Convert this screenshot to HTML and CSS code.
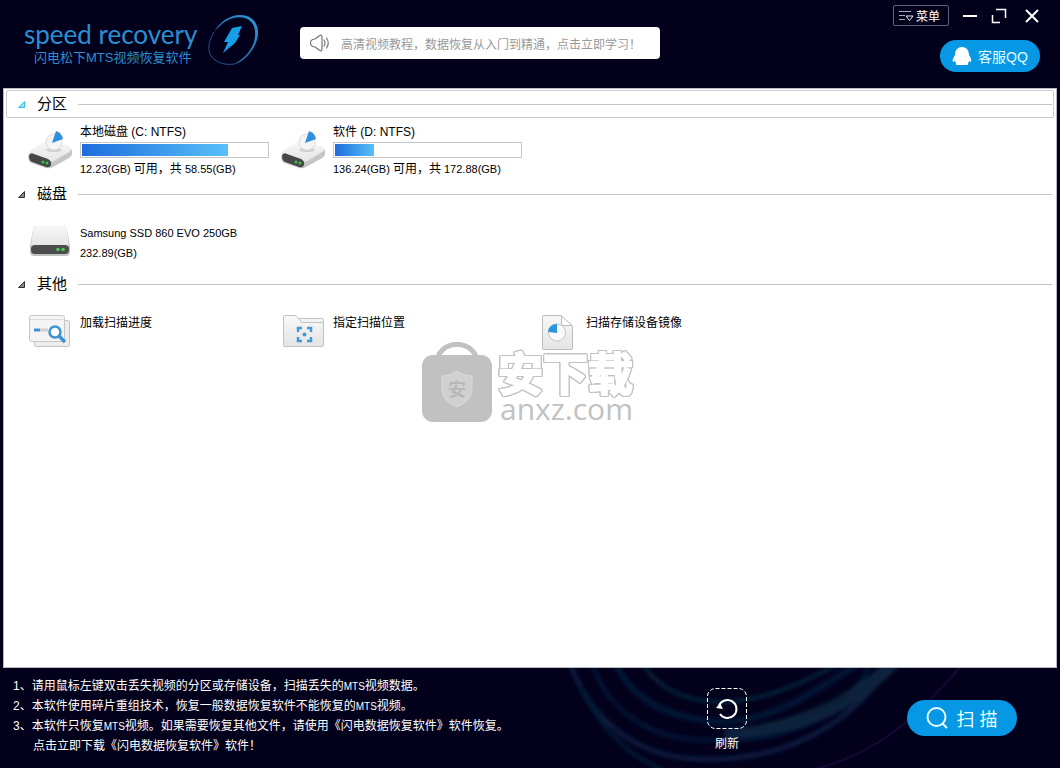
FILE: index.html
```html
<!DOCTYPE html>
<html lang="zh-CN">
<head>
<meta charset="utf-8">
<title>闪电松下MTS视频恢复软件</title>
<link rel="stylesheet" href="styles.css">
</head>
<body>
<header class="header">
  <div class="brand">
    <div class="brand-text">
      <span class="brand-name">speed recovery</span>
      <span class="brand-sub">闪电松下MTS视频恢复软件</span>
    </div>
    <svg class="brand-mark" viewBox="0 0 54 54" aria-hidden="true">
      <defs><linearGradient id="ring" x1="0" y1="1" x2="1" y2="0"><stop offset="0" stop-color="#1a4f80"/><stop offset="1" stop-color="#2c9ce0"/></linearGradient></defs>
      <path d="M8 19C15 6 29-1 41 3C52 7 55 20 49 32C44 42 36 50 26 52C38 46 45 38 48 29C51 17 48 8 39 5C28 2 17 8 8 19Z" fill="url(#ring)"/>
      <path d="M8 19C1 30 1 42 9 47C14 51 21 52 28 51" fill="none" stroke="#1c568a" stroke-width="1"/>
      <path d="M26 15L36 13L32 22H34L29 30L17 40L22 29H18Z" fill="#169fe6"/>
    </svg>
  </div>
  <a class="banner" href="#">
    <svg class="banner-icon" viewBox="0 0 20 18" aria-hidden="true" fill="none" stroke="#777" stroke-width="1.2" stroke-linejoin="round" stroke-linecap="round"><path d="M1 7Q0 9 1 11Q2 13 5 13L9 16Q12 18 12 15V3Q12 0 9 2L5 5Q2 5 1 7Z"/><path d="M14 6Q16 9 14 12M16.500 4Q20 9 16.500 14"/></svg>
    <span>高清视频教程，数据恢复从入门到精通，点击立即学习！</span>
  </a>
  <div class="header-right">
    <div class="window-bar">
      <button class="menu-btn"><svg width="15" height="12" viewBox="0 0 15 12" aria-hidden="true" fill="none" stroke="#aaa6bd"><path d="M0 1.500H12M0 5.500H6M0 9.500H6"/><path d="M7 6H14L10.500 10.500Z" stroke="#eee"/></svg>菜单</button>
      <button class="win-btn" aria-label="最小化"><svg width="16" height="16" viewBox="0 0 16 16"><path d="M1 8H15" stroke="#fff" stroke-width="2"/></svg></button>
      <button class="win-btn" aria-label="最大化"><svg width="16" height="16" viewBox="0 0 16 16" fill="none" stroke="#fff" stroke-width="1.500"><path d="M5 1.500H14.500V10M1.500 7V14.500H9"/></svg></button>
      <button class="win-btn" aria-label="关闭"><svg width="16" height="16" viewBox="0 0 16 16"><path d="M2 2L14 14M14 2L2 14" stroke="#fff" stroke-width="2"/></svg></button>
    </div>
    <button class="qq-btn"><svg width="20" height="20" viewBox="0 0 20 20" aria-hidden="true"><path d="M10 1C15 1 17 5 17 9C18 11 20 13 19 16L17 15Q17 16 16 17Q17 19 14 19H6Q3 19 4 17Q3 16 3 15L1 16C0 13 2 11 3 9C3 5 5 1 10 1Z" fill="#fff"/></svg>客服QQ</button>
  </div>
</header>

<main class="content">
  <section class="group">
    <h2 class="group-head active"><svg class="caret" viewBox="0 0 7 7" aria-hidden="true"><path d="M6.500 0.500V6.500H0.500Z"/></svg><span>分区</span></h2>
    <div class="items drives">
      <button class="item">
        <svg class="icon" viewBox="0 0 44 44" aria-hidden="true">
          <defs>
            <linearGradient id="top" x1="0" y1="0" x2="0" y2="1"><stop offset="0" stop-color="#f8f8f8"/><stop offset="1" stop-color="#e4e4e4"/></linearGradient>
            <linearGradient id="side" x1="0" y1="0" x2="1" y2="1"><stop offset="0" stop-color="#e8e8e8"/><stop offset="1" stop-color="#b8b8b8"/></linearGradient>
            <g id="drive">
              <path d="M1 22L17 12Q20 10 24 12L41 17Q45 19 44 24Q44 26 41 28L25 37Q22 39 18 38L3 33Q0 32 0 26Z" fill="url(#side)"/>
              <path d="M2 21L17 12Q20 10 24 12L41 17Q45 19 41 22L26 31Q23 33 19 31L3 25Q0 23 2 21Z" fill="url(#top)"/>
              <path d="M1 26Q2 22 6 24L20 29Q24 31 23 35Q22 38 18 37L4 32Q1 31 1 26Z" fill="#454847"/>
              <circle cx="15" cy="32" r="1.500" fill="#3fc04b"/><circle cx="19" cy="33" r="1.500" fill="#3fc04b"/>
              <ellipse cx="26" cy="20" rx="8" ry="2" fill="#d0d0d0"/>
              <circle cx="26" cy="12" r="8" fill="#f5f5f5" stroke="#dcdcdc"/>
              <path d="M24 13L28 1Q34 3 35 9Z" fill="#2f8fda"/>
            </g>
          </defs>
          <use href="#drive"/>
        </svg>
        <span class="item-text">
          <span class="title">本地磁盘 (C: NTFS)</span>
          <progress class="usage" max="100" value="79" aria-label="C: 已用空间"></progress>
          <span class="detail">12.23(GB) <span class="zh">可用，共</span> 58.55(GB)</span>
        </span>
      </button>
      <button class="item">
        <svg class="icon" viewBox="0 0 44 44" aria-hidden="true"><use href="#drive"/></svg>
        <span class="item-text">
          <span class="title">软件 (D: NTFS)</span>
          <progress class="usage" max="100" value="21" aria-label="D: 已用空间"></progress>
          <span class="detail">136.24(GB) <span class="zh">可用，共</span> 172.88(GB)</span>
        </span>
      </button>
    </div>
  </section>

  <section class="group">
    <h2 class="group-head"><svg class="caret" viewBox="0 0 7 7" aria-hidden="true"><path d="M6.500 0.500V6.500H0.500Z"/></svg><span>磁盘</span></h2>
    <div class="items">
      <button class="item">
        <svg class="icon" viewBox="0 0 44 36" aria-hidden="true">
          <path d="M5 5Q6 1 9 1H35Q38 1 39 5L42 21V27Q42 31 38 31H6Q2 31 2 27V21Z" fill="#c2c2c2"/>
          <path d="M5 5Q6 1 9 1H35Q38 1 39 5L41 21H3Z" fill="url(#top)"/>
          <rect x="3" y="20" width="38" height="9" rx="4" fill="#4a4d4b"/>
          <circle cx="30" cy="24.500" r="1.800" fill="#48c858"/><circle cx="35" cy="24.500" r="1.800" fill="#48c858"/>
        </svg>
        <span class="item-text">
          <span class="detail">Samsung SSD 860 EVO 250GB</span>
          <span class="detail">232.89(GB)</span>
        </span>
      </button>
    </div>
  </section>

  <section class="group">
    <h2 class="group-head"><svg class="caret" viewBox="0 0 7 7" aria-hidden="true"><path d="M6.500 0.500V6.500H0.500Z"/></svg><span>其他</span></h2>
    <div class="items">
      <button class="item">
        <svg class="icon" viewBox="0 0 44 36" aria-hidden="true">
          <rect x="6.500" y="5.500" width="35" height="26" rx="2" fill="#ededed" stroke="#c2c2c2"/>
          <rect x="1.500" y="0.500" width="35" height="26" rx="2" fill="#f4f4f4" stroke="#c6c6c6"/>
          <path d="M2 4.500H36" stroke="#dcdcdc"/>
          <path d="M6 15H12" stroke="#3d92d4" stroke-width="3"/><path d="M12 15H20" stroke="#cfcfcf" stroke-width="3"/>
          <circle cx="27" cy="17" r="5.500" fill="#fff" stroke="#3d92d4" stroke-width="2.500"/>
          <path d="M31 21L37 27" stroke="#3d92d4" stroke-width="3.500"/>
        </svg>
        <span class="item-text"><span class="title">加载扫描进度</span></span>
      </button>
      <button class="item">
        <svg class="icon" viewBox="0 0 44 36" aria-hidden="true">
          <path d="M16 3.500H41Q42.500 3.500 42.500 5V12H16Z" fill="#f3f3f3" stroke="#c6c6c6"/>
          <path d="M2.500 2Q2.500 0.500 4 0.500H15L21 7.500H41Q42.500 7.500 42.500 9V30Q42.500 31.500 41 31.500H4Q2.500 31.500 2.500 30Z" fill="url(#top)" stroke="#c2c2c2"/>
          <path d="M17 17V13H21M26 13H30V17M30 22V26H26M21 26H17V22" fill="none" stroke="#3f98d8" stroke-width="2.500"/><circle cx="23.500" cy="19.500" r="2" fill="#3f98d8"/>
        </svg>
        <span class="item-text"><span class="title">指定扫描位置</span></span>
      </button>
      <button class="item">
        <svg class="icon" viewBox="0 0 44 36" aria-hidden="true">
          <path d="M10 0.500H27L38.500 11V33Q38.500 34.500 37 34.500H10Q8.500 34.500 8.500 33V2Q8.500 0.500 10 0.500Z" fill="url(#top)" stroke="#bdbdbd"/>
          <path d="M27.500 1V9Q27.500 10.500 29 10.500H38Z" fill="#fff" stroke="#bdbdbd"/>
          <circle cx="23" cy="17.500" r="8.500" fill="#fafafa" stroke="#c6c6c6"/>
          <path d="M23 18L14 17Q15 9 23 9Z" fill="#2f93df"/>
        </svg>
        <span class="item-text"><span class="title">扫描存储设备镜像</span></span>
      </button>
    </div>
  </section>

  <div class="watermark">
    <svg class="bag" viewBox="0 0 72 82" aria-hidden="true">
      <path d="M17 15C23 -2 49 -2 55 15" fill="none" stroke="#c1c1c1" stroke-width="5"/>
      <rect x="1" y="13" width="70" height="67" rx="11" fill="#c1c1c1"/>
      <path d="M36 29Q43 34 51 34V47Q50 60 36 65Q22 60 21 47V34Q29 34 36 29Z" fill="#d0d0d0" stroke="#dadada"/>
      <text class="bag-char" x="36" y="54" text-anchor="middle">安</text>
    </svg>
    <div class="watermark-text">
      <span class="watermark-zh">安下载</span>
      <span class="watermark-url">anxz.com</span>
    </div>
  </div>
</main>

<footer class="footer">
  <svg class="swirl" viewBox="0 0 540 100" aria-hidden="true" fill="none">
    <defs><filter id="soft" x="-10%" y="-20%" width="120%" height="140%"><feGaussianBlur stdDeviation="2"/></filter></defs>
    <g filter="url(#soft)">
      <path d="M50 -5C70 50 115 90 180 91C260 94 330 60 372 -5" stroke="#081f40" stroke-width="5"/>
      <path d="M72 -5C90 50 140 73 190 72C270 74 330 48 350 -5" stroke="#061634" stroke-width="5"/>
      <path d="M95 -5C115 38 160 52 205 54C260 50 290 25 340 -5" stroke="#061836" stroke-width="7"/>
      <path d="M122 -5C140 24 170 33 198 34C250 34 290 10 320 -5" stroke="#0c2f44" stroke-width="3"/>
      <path d="M205 66C275 62 325 46 375 -5" stroke="#08243e" stroke-width="11"/>
      <path d="M60 20C90 75 120 96 160 108" stroke="#061a34" stroke-width="4"/>
      <path d="M240 58C290 48 330 28 365 -3" stroke="#0c3244" stroke-width="2"/>
    </g>
    <path d="M285 103C350 90 390 57 441 -2" stroke="#180838" stroke-width="2"/>
  </svg>
  <div class="notes">
    <p>1、请用鼠标左键双击丢失视频的分区或存储设备，扫描丢失的<span class="latin">MTS</span>视频数据。</p>
    <p>2、本软件使用碎片重组技术，恢复一般数据恢复软件不能恢复的<span class="latin">MTS</span>视频。</p>
    <p>3、本软件只恢复<span class="latin">MTS</span>视频。如果需要恢复其他文件，请使用《闪电数据恢复软件》软件恢复。</p>
    <p class="indent"><a href="#">点击立即下载《闪电数据恢复软件》软件！</a></p>
  </div>
  <button class="refresh">
    <svg width="40" height="41" viewBox="0 0 40 41" aria-hidden="true" fill="none" stroke="#fff"><rect x="0.500" y="0.500" width="39" height="40" rx="8" stroke-dasharray="4 2"/><path d="M13 26A9 9 0 1 0 12 18" stroke-width="2"/><path d="M9 20L13 15L16 21Z" fill="#fff" stroke="none"/></svg>
    刷新
  </button>
  <button class="scan"><svg width="22" height="22" viewBox="0 0 22 22" aria-hidden="true" fill="none" stroke="#e8ffff" stroke-width="2"><circle cx="10.500" cy="10" r="9"/><path d="M16 16L21 21"/></svg>扫 描</button>
</footer>
</body>
</html>
```

FILE: styles.css
```css
* {
  box-sizing: border-box;
}

body {
  margin: 0;
  min-height: 100vh;
  display: flex;
  flex-direction: column;
  background: #03001b;
  color: #000;
  font-family: "Liberation Sans", "Noto Sans CJK SC", sans-serif;
  font-size: 12px;
}

button {
  border: 0;
  padding: 0;
  background: none;
  color: inherit;
  font: inherit;
  cursor: pointer;
}

a {
  color: inherit;
  text-decoration: none;
}

svg {
  display: block;
  flex: none;
}

.header {
  height: 88px;
  display: flex;
  align-items: flex-start;
  padding: 0 20px 0 24px;
}

.brand {
  display: flex;
  width: 276px;
  padding-top: 13px;
  gap: 8px;
  color: #2a8fd0;
}

.brand-text {
  display: flex;
  flex-direction: column;
  width: 174px;
  padding-top: 5px;
}

.brand-name {
  font-family: Lato, "Liberation Sans", sans-serif;
  font-size: 26px;
  line-height: 32px;
  white-space: nowrap;
}

.brand-sub {
  padding-left: 10px;
  font-size: 13px;
  line-height: 16px;
  white-space: nowrap;
}

.brand-mark {
  width: 54px;
  height: 54px;
}

.banner {
  display: flex;
  align-items: center;
  gap: 11px;
  width: 360px;
  height: 32px;
  margin-top: 27px;
  padding-left: 10px;
  border-radius: 4px;
  background: #fff;
  color: #999;
  white-space: nowrap;
}

.banner-icon {
  width: 20px;
  height: 18px;
}

.header-right {
  margin-left: auto;
  padding-top: 5px;
  display: flex;
  flex-direction: column;
  align-items: flex-end;
  gap: 14px;
}

.window-bar {
  display: flex;
  align-items: center;
  gap: 13px;
  color: #fff;
}

.menu-btn {
  display: flex;
  align-items: center;
  gap: 2px;
  height: 21px;
  padding: 0 8px 0 5px;
  border: 1px solid #625f78;
  border-radius: 2px;
}

.win-btn {
  width: 16px;
  height: 16px;
}

.win-btn:last-child {
  margin-left: 4px;
}

.qq-btn {
  display: flex;
  align-items: center;
  justify-content: center;
  gap: 6px;
  width: 100px;
  height: 32px;
  border-radius: 16px;
  background: #0698e5;
  color: #e4ffff;
  font-size: 14px;
}

.content {
  position: relative;
  flex: 1;
  margin: 0 3px;
  padding: 1px 2px;
  border: 1px solid #b9b9c4;
  background: #fff;
}

.group-head {
  display: flex;
  align-items: center;
  height: 28px;
  margin: 0;
  padding: 0 1px 0 11px;
  border: 1px solid transparent;
  font-size: 15px;
  font-weight: 400;
}

.group-head span {
  padding-bottom: 4px;
}

.group-head::after {
  content: "";
  flex: 1;
  height: 1px;
  margin-left: 11px;
  background: #c4c4c4;
}

.group-head.active {
  border-color: #cbcbcb;
  border-radius: 2px;
}

.caret {
  width: 7px;
  height: 7px;
  margin-right: 12px;
  fill: #888;
  stroke: #333;
}

.active .caret {
  fill: #8fe3f5;
  stroke: #34bfe0;
}

.items {
  display: grid;
  grid-template-columns: repeat(auto-fill, 253px);
  height: 62px;
  padding: 17px 0 0 22px;
}

.items.drives {
  padding-top: 6px;
}

.item {
  display: flex;
  align-items: flex-start;
  gap: 8px;
  text-align: left;
}

.icon {
  width: 44px;
  height: 36px;
}

.drives .icon {
  height: 44px;
  margin-top: 6px;
}

.item-text {
  display: flex;
  flex-direction: column;
  gap: 4px;
}

.drives .item-text {
  gap: 2px;
}

.title,
.detail {
  line-height: 16px;
  white-space: nowrap;
}

.detail {
  font-size: 11px;
}

.drives .detail {
  line-height: 18px;
}

.zh {
  font-size: 12px;
}

.usage {
  appearance: none;
  display: block;
  width: 189px;
  height: 16px;
  padding: 1px;
  border: 1px solid #c4c8c8;
  background: #fff;
}

.usage::-webkit-progress-bar {
  background: #fff;
}

.usage::-webkit-progress-value {
  background: linear-gradient(90deg, #1d6ddd, #58c0f8);
}

.watermark {
  position: absolute;
  top: 253px;
  left: 417px;
  display: flex;
  gap: 5px;
  color: #c1c1c1;
  pointer-events: none;
}

.bag {
  width: 72px;
  height: 82px;
}

.bag-char {
  fill: #b8b8b8;
  font-size: 18px;
  font-weight: 700;
}

.watermark-text {
  display: flex;
  flex-direction: column;
  padding-top: 13px;
}

.watermark-zh {
  color: #fff;
  font-size: 45px;
  font-weight: 700;
  line-height: 42px;
  -webkit-text-stroke: 2px #fff;
  filter: drop-shadow(1px 0 0 #c1c1c1) drop-shadow(-1px 0 0 #c1c1c1) drop-shadow(0 1px 0 #c1c1c1) drop-shadow(0 -1px 0 #c1c1c1);
}

.watermark-url {
  padding: 6px 0 0 2px;
  font-family: "Open Sans", sans-serif;
  font-size: 30px;
  line-height: 12px;
}

.footer {
  position: relative;
  height: 100px;
  display: flex;
  align-items: flex-start;
  padding: 0 43px 0 13px;
  overflow: hidden;
  color: #fff;
}

.swirl {
  position: absolute;
  right: 0;
  top: 0;
  width: 540px;
  height: 100px;
}

.notes {
  position: relative;
  flex: 1;
  padding-top: 8px;
  line-height: 20px;
  white-space: nowrap;
}

.notes p {
  margin: 0;
}

.notes .indent {
  padding-left: 20px;
}

.latin {
  font-size: 10px;
  line-height: 10px;
}

.refresh {
  position: relative;
  display: flex;
  flex-direction: column;
  align-items: center;
  gap: 5px;
  margin: 20px 160px 0 0;
}

.scan {
  position: relative;
  display: flex;
  align-items: center;
  justify-content: center;
  gap: 8px;
  width: 110px;
  height: 36px;
  margin-top: 32px;
  border-radius: 18px;
  background: #0698e5;
  color: #e8ffff;
  font-size: 18px;
}
```
